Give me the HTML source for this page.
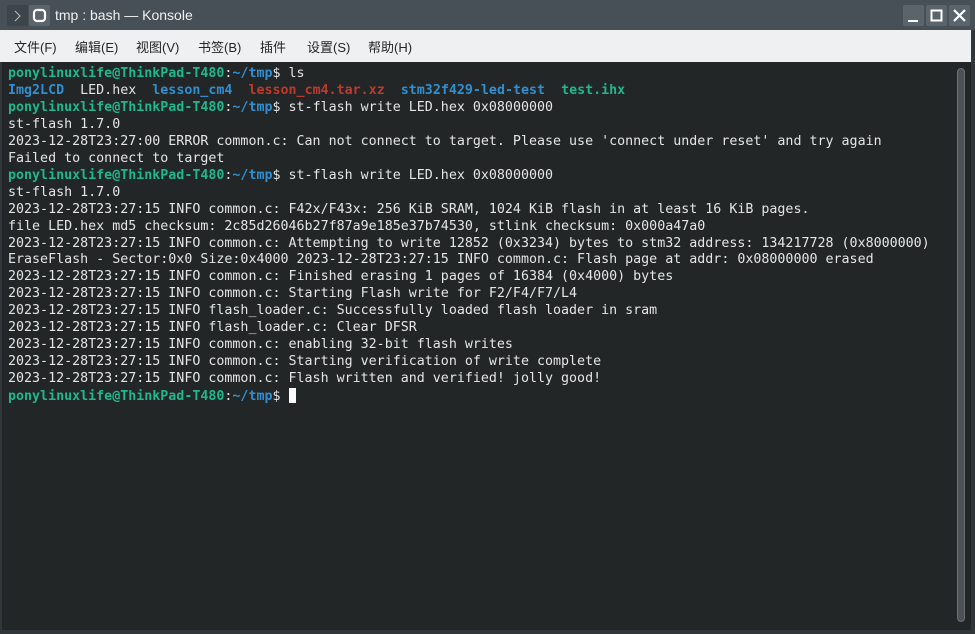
<!DOCTYPE html>
<html><head><meta charset="utf-8"><style>
html,body{margin:0;padding:0;width:975px;height:634px;overflow:hidden;background:#31363b;}
.title{position:absolute;left:0;top:0;width:975px;height:30px;background:#475057;}
.title .t{position:absolute;left:55px;top:7px;font:14px "Liberation Sans","DejaVu Sans",sans-serif;color:#eff0f1;}
.ib{position:absolute;top:5px;width:21px;height:21px;background:#5a646b;border-radius:2px;}
.menu{position:absolute;left:0;top:30px;width:971px;height:32px;background:#eff0f1;font:13px "Liberation Sans","Noto Sans CJK SC",sans-serif;color:#232627;}
.menu span{position:absolute;top:7px;}
.term{position:absolute;left:2px;top:62px;width:969px;height:568px;background:#232627;}
pre{position:absolute;left:6px;top:4px;margin:0;font:13.32px/16.95px "DejaVu Sans Mono","Liberation Mono",monospace;color:#e3e5e6;}
.g{color:#1eb88a;font-weight:bold}.b{color:#2f8fd0;font-weight:bold}.r{color:#c0392b;font-weight:bold}
.cur{display:inline-block;width:7px;height:15px;background:#fcfcfc;vertical-align:-3px;}
.sb{position:absolute;left:957px;top:68px;width:8px;height:554px;border-radius:4px;background:#4d5257;border:1px solid #6a7075;box-sizing:border-box;}
</style></head><body>
<div class="title">
<div class="ib" style="left:7px;background:#3d454b"><svg width="21" height="21"><path d="M8 6l5 5-5 5" stroke="#aeb3b7" fill="none" stroke-width="1.2"/></svg></div>
<div class="ib" style="left:29px"><svg width="21" height="21"><rect x="5" y="5" width="11" height="11" rx="3" stroke="#fff" stroke-width="2.2" fill="none"/></svg></div>
<div class="t">tmp : bash — Konsole</div>
<div class="ib" style="left:903px"><svg width="21" height="21"><rect x="5" y="15" width="10" height="2" fill="#fff"/></svg></div>
<div class="ib" style="left:926px"><svg width="21" height="21"><rect x="5.5" y="5.5" width="10" height="10" stroke="#fff" stroke-width="2" fill="none"/></svg></div>
<div class="ib" style="left:949px"><svg width="21" height="21"><path d="M5 5l11 11M16 5L5 16" stroke="#fff" stroke-width="2.2"/></svg></div>
</div>
<div class="menu"><span style="left:14px">文件(F)</span><span style="left:75px">编辑(E)</span><span style="left:136px">视图(V)</span><span style="left:198px">书签(B)</span><span style="left:260px">插件</span><span style="left:307px">设置(S)</span><span style="left:368px">帮助(H)</span></div>
<div class="term"><pre><span class="g">ponylinuxlife@ThinkPad-T480</span>:<span class="b">~/tmp</span>$ ls
<span class="b">Img2LCD</span>  LED.hex  <span class="b">lesson_cm4</span>  <span class="r">lesson_cm4.tar.xz</span>  <span class="b">stm32f429-led-test</span>  <span class="g">test.ihx</span>
<span class="g">ponylinuxlife@ThinkPad-T480</span>:<span class="b">~/tmp</span>$ st-flash write LED.hex 0x08000000
st-flash 1.7.0
2023-12-28T23:27:00 ERROR common.c: Can not connect to target. Please use 'connect under reset' and try again
Failed to connect to target
<span class="g">ponylinuxlife@ThinkPad-T480</span>:<span class="b">~/tmp</span>$ st-flash write LED.hex 0x08000000
st-flash 1.7.0
2023-12-28T23:27:15 INFO common.c: F42x/F43x: 256 KiB SRAM, 1024 KiB flash in at least 16 KiB pages.
file LED.hex md5 checksum: 2c85d26046b27f87a9e185e37b74530, stlink checksum: 0x000a47a0
2023-12-28T23:27:15 INFO common.c: Attempting to write 12852 (0x3234) bytes to stm32 address: 134217728 (0x8000000)
EraseFlash - Sector:0x0 Size:0x4000 2023-12-28T23:27:15 INFO common.c: Flash page at addr: 0x08000000 erased
2023-12-28T23:27:15 INFO common.c: Finished erasing 1 pages of 16384 (0x4000) bytes
2023-12-28T23:27:15 INFO common.c: Starting Flash write for F2/F4/F7/L4
2023-12-28T23:27:15 INFO flash_loader.c: Successfully loaded flash loader in sram
2023-12-28T23:27:15 INFO flash_loader.c: Clear DFSR
2023-12-28T23:27:15 INFO common.c: enabling 32-bit flash writes
2023-12-28T23:27:15 INFO common.c: Starting verification of write complete
2023-12-28T23:27:15 INFO common.c: Flash written and verified! jolly good!
<span class="g">ponylinuxlife@ThinkPad-T480</span>:<span class="b">~/tmp</span>$ <span class="cur"></span></pre></div>
<div class="sb"></div>
</body></html>
